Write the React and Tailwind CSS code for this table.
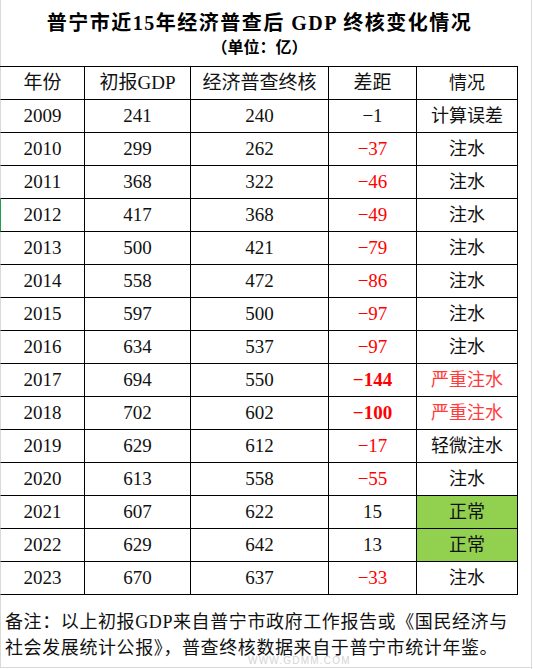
import React from "react";

const ROWS = [
  ["2009", "241", "240", "−1", "计算误差"],
  ["2010", "299", "262", "−37", "注水"],
  ["2011", "368", "322", "−46", "注水"],
  ["2012", "417", "368", "−49", "注水"],
  ["2013", "500", "421", "−79", "注水"],
  ["2014", "558", "472", "−86", "注水"],
  ["2015", "597", "500", "−97", "注水"],
  ["2016", "634", "537", "−97", "注水"],
  ["2017", "694", "550", "−144", "严重注水"],
  ["2018", "702", "602", "−100", "严重注水"],
  ["2019", "629", "612", "−17", "轻微注水"],
  ["2020", "613", "558", "−55", "注水"],
  ["2021", "607", "622", "15", "正常"],
  ["2022", "629", "642", "13", "正常"],
  ["2023", "670", "637", "−33", "注水"],
];

function Row({ cells, header, marked }) {
  const [year, first, final, diff, status] = cells;
  const negative = diff.startsWith("−") && diff !== "−1";
  const severe = status === "严重注水";
  const normal = status === "正常";

  return (
    <div
      className={`flex h-[33px] w-[518px] border-b border-l border-b-black text-[19px] ${
        marked ? "border-l-[#1f9d55]" : "border-l-[#d9d9d9]"
      }`}
    >
      <div className="flex w-[84px] items-center justify-center border-r border-black">{year}</div>
      <div className="flex w-[106px] items-center justify-center border-r border-black">{first}</div>
      <div className="flex w-[138px] items-center justify-center border-r border-black">{final}</div>
      <div
        className={`flex w-[88px] items-center justify-center border-r border-black ${
          !header && negative ? "text-[#ff0000]" : ""
        } ${severe ? "font-bold" : ""}`}
      >
        {diff}
      </div>
      <div
        className={`flex w-[101px] items-center justify-center border-r border-black text-[18px] ${
          severe ? "text-[#ff3c3c]" : ""
        } ${normal ? "bg-[#92d050]" : ""}`}
      >
        {status}
      </div>
    </div>
  );
}

export default function App() {
  return (
    <div className="relative h-[669px] w-[535px] bg-white font-['Liberation_Serif','Noto_Sans_CJK_SC',serif] text-[18px] text-[#111]">
      <div className="h-[669px] w-[532px] border-r border-[#d9d9d9]">
        {/* title */}
        <div className="flex h-[66px] w-[518px] flex-col items-center border-l border-[#d9d9d9] pt-[10px] font-bold text-black">
          <div className="text-[20px] leading-[26px] tracking-[1.5px]">普宁市近15年经济普查后 GDP 终核变化情况</div>
          <div className="text-[16px] leading-[24px]">（单位：亿）</div>
        </div>

        <div className="border-t border-black w-[518px]">
          <Row header cells={["年份", "初报GDP", "经济普查终核", "差距", "情况"]} />
          {ROWS.map((r) => (
            <Row key={r[0]} cells={r} marked={r[0] === "2012"} />
          ))}
        </div>

        {/* notes */}
        <div className="h-[73px] border-b border-l border-[#d9d9d9] pl-[4px] pt-[14px] text-[18px] leading-[26px] tracking-[0.6px]">
          <div>备注：以上初报GDP来自普宁市政府工作报告或《国民经济与</div>
          <div>社会发展统计公报》，普查终核数据来自于普宁市统计年鉴。</div>
        </div>
      </div>

      {/* watermark */}
      <div className="pointer-events-none absolute left-[248px] top-[656px] font-['Liberation_Sans',sans-serif] text-[10px] leading-none tracking-[1.2px] text-[#d4d4d4]">
        WWW.GDMM.COM
      </div>
    </div>
  );
}
